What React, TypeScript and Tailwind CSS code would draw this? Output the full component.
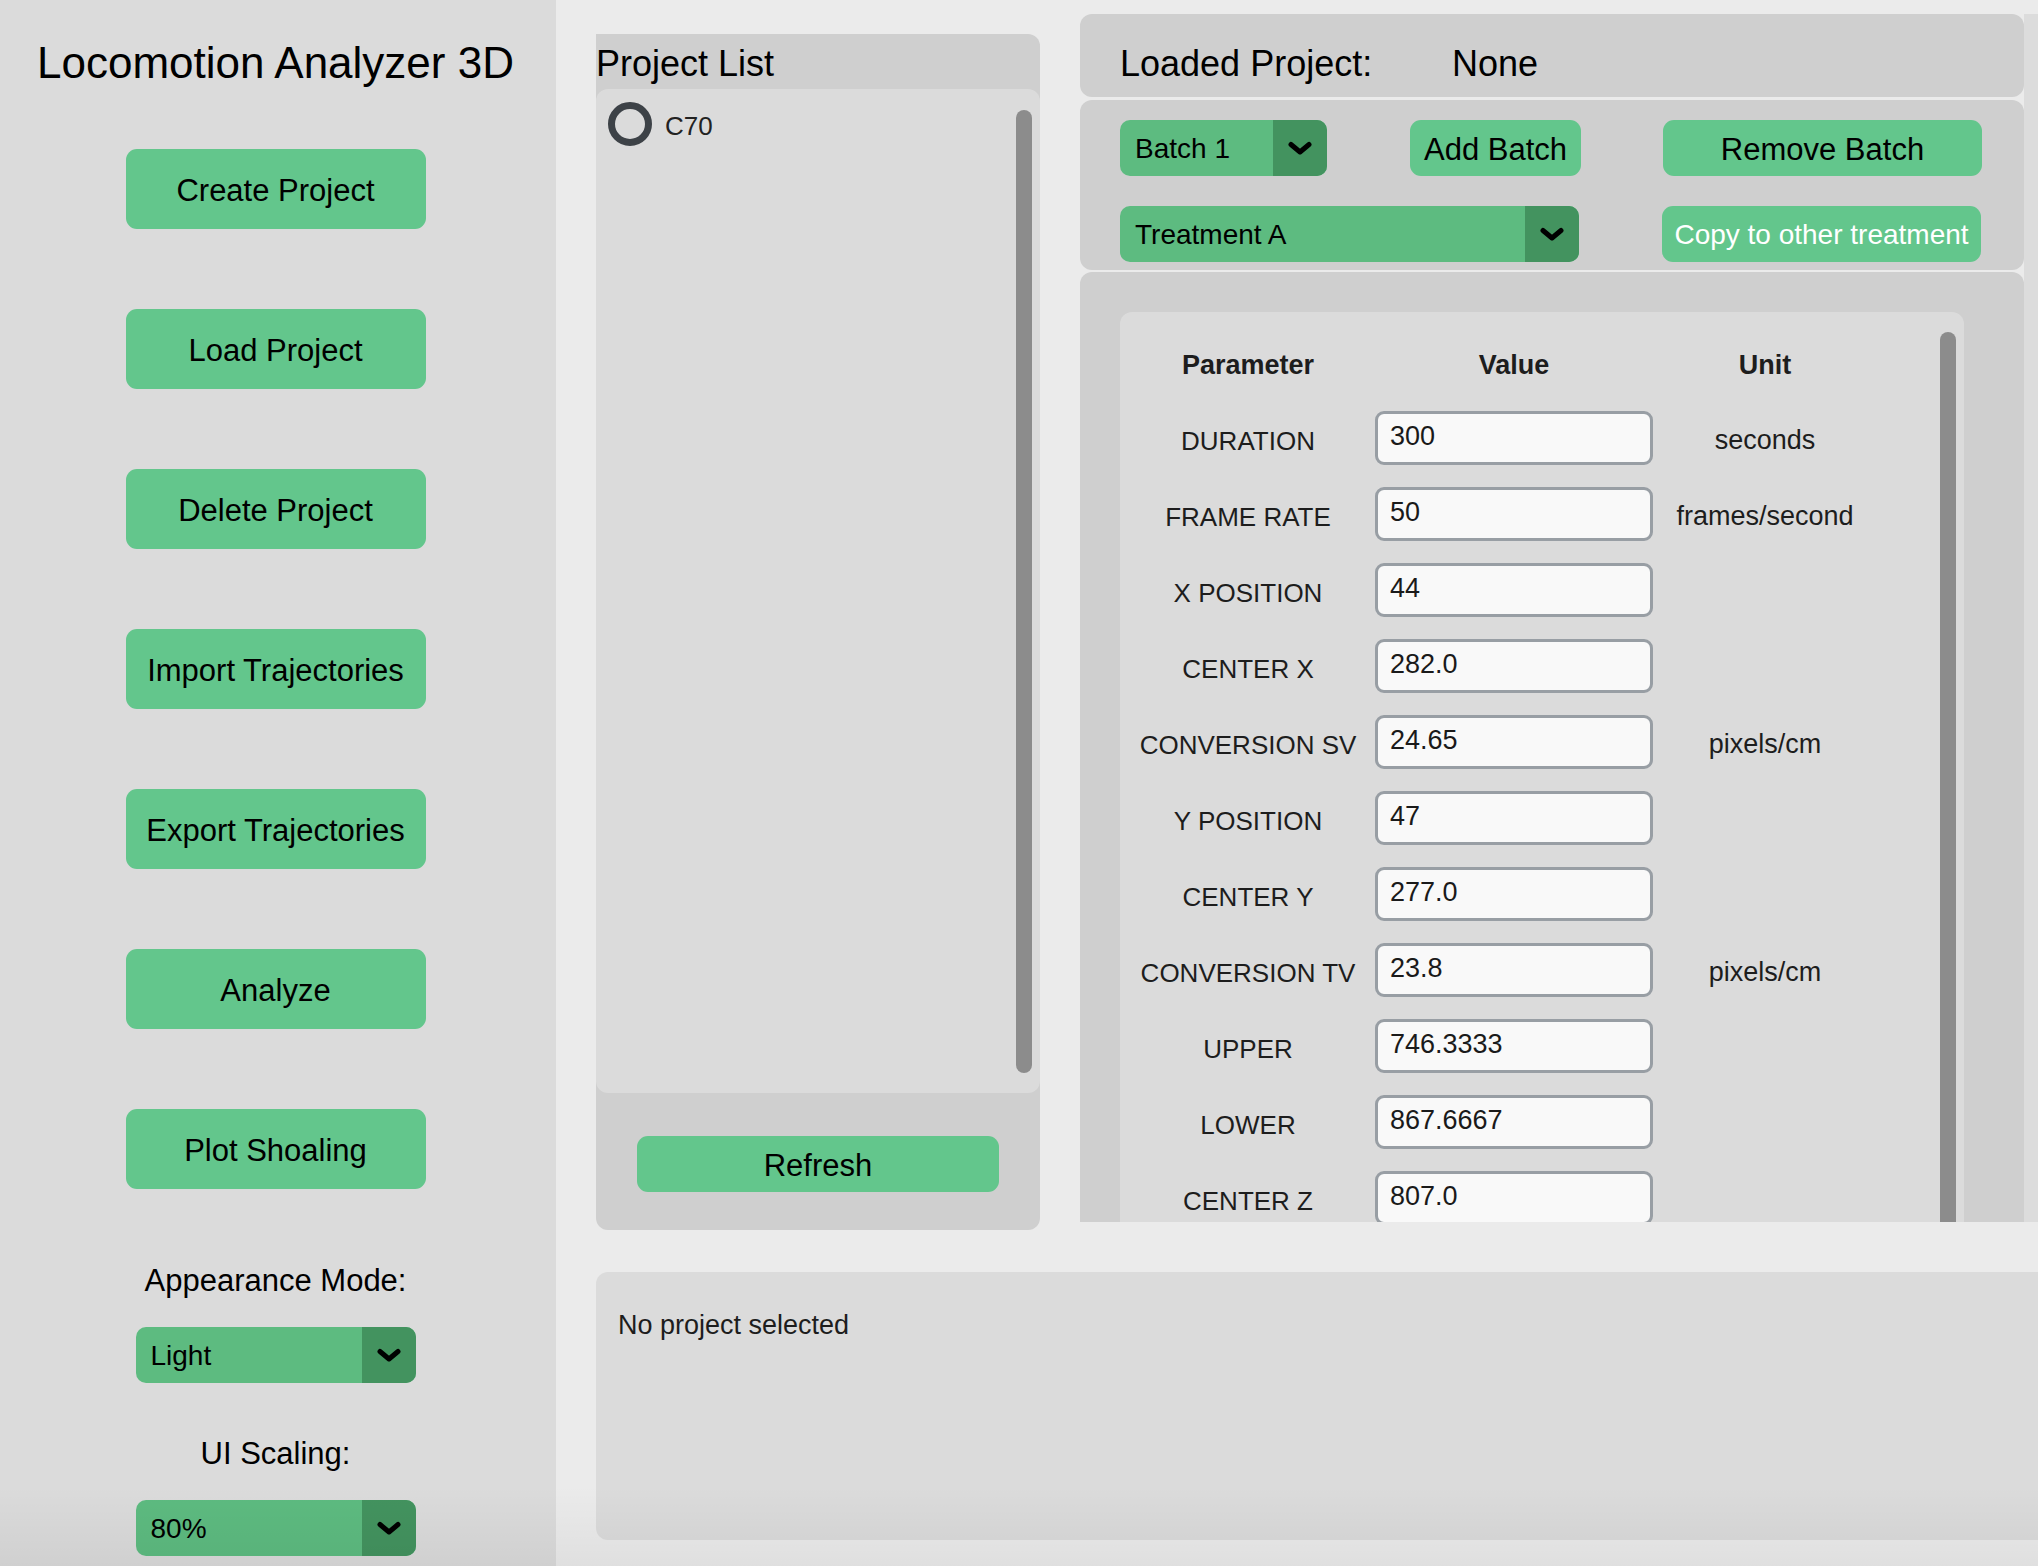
import clsx from 'clsx';

const SIDE_BUTTONS = [
    'Create Project',
    'Load Project',
    'Delete Project',
    'Import Trajectories',
    'Export Trajectories',
    'Analyze',
    'Plot Shoaling',
];

// parameter name, value, unit
const PARAMS: [string, string, string][] = [
    ['DURATION', '300', 'seconds'],
    ['FRAME RATE', '50', 'frames/second'],
    ['X POSITION', '44', ''],
    ['CENTER X', '282.0', ''],
    ['CONVERSION SV', '24.65', 'pixels/cm'],
    ['Y POSITION', '47', ''],
    ['CENTER Y', '277.0', ''],
    ['CONVERSION TV', '23.8', 'pixels/cm'],
    ['UPPER', '746.3333', ''],
    ['LOWER', '867.6667', ''],
    ['CENTER Z', '807.0', ''],
];

function Chevron() {
    return (
        <svg width="24" height="15" viewBox="0 0 24 15" fill="none">
            <polyline points="3,3.5 12,11 21,3.5" stroke="#000" strokeWidth="5" strokeLinecap="round" strokeLinejoin="round" />
        </svg>
    );
}

function Dropdown({ value, className }: { value: string; className?: string }) {
    return (
        <div className={clsx('flex h-[56px] rounded-[10px] overflow-hidden bg-[#5dbb80]', className)}>
            <span className="flex-1 flex items-center pl-[15px] pt-[2px] text-[28px] leading-none text-black">{value}</span>
            <span className="w-[54px] flex items-center justify-center bg-[#43935f]">
                <Chevron />
            </span>
        </div>
    );
}

function GreenButton({ label, className, light }: { label: string; className?: string; light?: boolean }) {
    return (
        <button
            className={clsx(
                'flex items-center justify-center pt-[2px] rounded-[11px] bg-[#63c68c] leading-none',
                light ? 'text-white text-[28px]' : 'text-black text-[31px]',
                className
            )}
        >
            {label}
        </button>
    );
}

export default function App() {
    return (
        <div className="relative flex w-[2038px] h-[1566px] overflow-hidden bg-[#ebebeb] font-['Liberation_Sans',Arial,sans-serif]">
            {/* Sidebar */}
            <aside className="w-[556px] shrink-0 bg-[#dbdbdb] flex flex-col items-center pr-[5px]">
                <h1 className="mt-[41px] text-[44px] leading-none text-black">Locomotion Analyzer 3D</h1>
                <div className="mt-[64px] flex flex-col gap-[80px]">
                    {SIDE_BUTTONS.map((label) => (
                        <GreenButton key={label} label={label} className="w-[300px] h-[80px]" />
                    ))}
                </div>
                <p className="mt-[76px] text-[31px] leading-none text-black">Appearance Mode:</p>
                <Dropdown value="Light" className="mt-[31px] w-[280px]" />
                <p className="mt-[55px] text-[31px] leading-none text-black">UI Scaling:</p>
                <Dropdown value="80%" className="mt-[31px] w-[280px]" />
            </aside>

            {/* Main area */}
            <main className="flex-1 flex flex-col pl-[40px]">
                <div className="flex items-start gap-[40px] h-[1230px]">
                    {/* Project list */}
                    <section className="mt-[34px] w-[444px] h-[1196px] bg-[#cfcfcf] rounded-tr-[12px] rounded-b-[12px] flex flex-col">
                        <div className="h-[55px] pt-[12px]">
                            <h2 className="text-[36px] leading-none text-black">Project List</h2>
                        </div>
                        <div className="h-[1004px] bg-[#dbdbdb] rounded-[12px] flex">
                            <div className="flex-1 pt-[13px] pl-[12px]">
                                <label className="flex items-center">
                                    <span className="w-[44px] h-[44px] rounded-full border-[7px] border-[#3d4247]" />
                                    <span className="ml-[13px] mt-[4px] text-[26px] leading-none text-[#222]">C70</span>
                                </label>
                            </div>
                            <div className="w-[16px] mt-[21px] mb-[20px] mr-[8px] rounded-full bg-[#8c8c8c]" />
                        </div>
                        <div className="flex justify-center mt-[43px]">
                            <GreenButton label="Refresh" className="w-[362px] h-[56px]" />
                        </div>
                    </section>

                    {/* Right column */}
                    <div className="mt-[14px] flex-1 h-[1208px] flex overflow-hidden">
                        <div className="w-[944px] flex flex-col">
                            <div className="h-[83px] bg-[#cfcfcf] rounded-[12px] pl-[40px] pt-[32px] flex text-[36px] leading-none text-black">
                                <span className="w-[332px]">Loaded Project:</span>
                                <span>None</span>
                            </div>
                            <div className="mt-[3px] h-[170px] bg-[#cfcfcf] rounded-[12px] pl-[40px] pt-[20px]">
                                <div className="flex">
                                    <Dropdown value="Batch 1" className="w-[207px]" />
                                    <GreenButton label="Add Batch" className="ml-[83px] w-[171px] h-[56px]" />
                                    <GreenButton label="Remove Batch" className="ml-[82px] w-[319px] h-[56px]" />
                                </div>
                                <div className="flex mt-[30px]">
                                    <Dropdown value="Treatment A" className="w-[459px]" />
                                    <GreenButton label="Copy to other treatment" light className="ml-[83px] w-[319px] h-[56px]" />
                                </div>
                            </div>
                            <div className="mt-[2px] flex-1 bg-[#cfcfcf] rounded-t-[12px] pt-[40px] pl-[40px] overflow-hidden">
                                <div className="w-[844px] h-[1000px] bg-[#dbdbdb] rounded-t-[12px] flex">
                                    <div className="flex-1 pl-[15px] pt-[40px] text-[#1d1d1d]">
                                        <div className="grid grid-cols-[226px_278px_196px] gap-x-[14px] text-[27px] font-bold leading-none text-center">
                                            <span>Parameter</span>
                                            <span>Value</span>
                                            <span>Unit</span>
                                        </div>
                                        <div className="mt-[32px] grid grid-cols-[226px_278px_196px] gap-x-[14px] gap-y-[22px] items-center">
                                            {PARAMS.map(([name, value, unit]) => (
                                                <div key={name} className="contents">
                                                    <span className="text-center text-[26px] leading-none pt-[5px]">{name}</span>
                                                    <input
                                                        readOnly
                                                        value={value}
                                                        className="w-[278px] h-[54px] rounded-[9px] border-[3px] border-[#989ea4] bg-[#f9f9f9] pl-[12px] pb-[3px] text-[27px] text-[#1a1a1a] outline-none"
                                                    />
                                                    <span className="text-center text-[27px] leading-none pt-[5px]">{unit}</span>
                                                </div>
                                            ))}
                                        </div>
                                    </div>
                                    <div className="w-[16px] mt-[20px] mr-[8px] rounded-t-full bg-[#8c8c8c]" />
                                </div>
                            </div>
                        </div>
                        <div className="flex-1 bg-[#dcdcdc]" />
                    </div>
                </div>

                {/* Status panel */}
                <section className="mt-[42px] h-[268px] bg-[#dbdbdb] rounded-l-[12px] pl-[22px] pt-[40px]">
                    <p className="text-[27px] leading-none text-[#1d1d1d]">No project selected</p>
                </section>
            </main>

            {/* window shadow at the bottom edge */}
            <div className="pointer-events-none absolute inset-x-0 bottom-0 h-[80px] bg-linear-to-t from-black/[0.05] to-transparent" />
        </div>
    );
}
